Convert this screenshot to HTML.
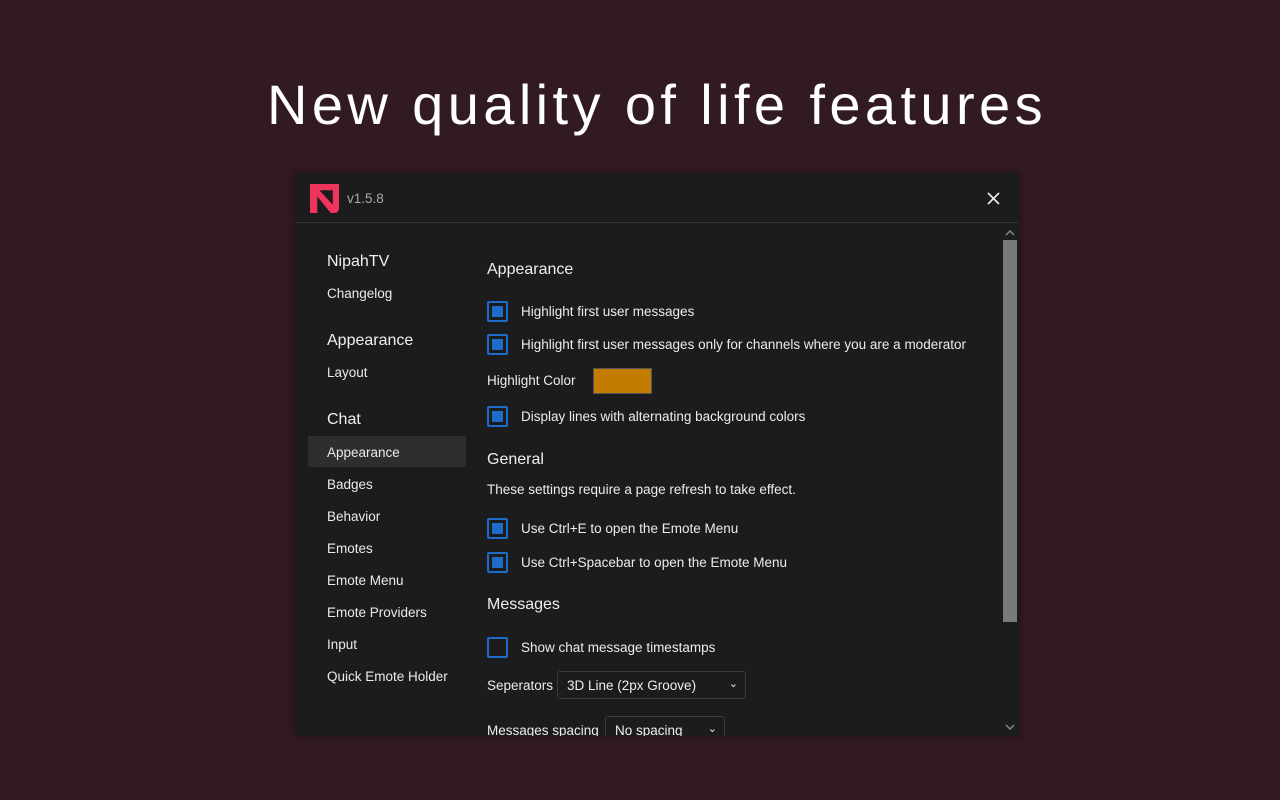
<!DOCTYPE html>
<html><head><meta charset="utf-8"><style>
*{box-sizing:border-box;margin:0;padding:0}
body{width:1280px;height:800px;background:#311a20;font-family:"Liberation Sans",sans-serif;position:relative;overflow:hidden;color:#e8e8e8}
h1{position:absolute;left:17px;width:1280px;top:72px;text-align:center;font-weight:400;font-size:56px;letter-spacing:4.4px;color:#fff}
.win{position:absolute;left:295px;top:173px;width:724px;height:563px;background:#1c1c1e;box-shadow:0 0 8px rgba(0,0,0,.4);overflow:hidden}
.hdr{position:absolute;left:0;top:0;width:724px;height:50px;border-bottom:1px solid #333}
.a{position:absolute;white-space:nowrap}
.nav{font-size:13.5px;color:#eaeaea}
.navh{font-size:16px;color:#f0f0f0}
.sel{position:absolute;left:13px;top:263px;width:158px;height:31px;background:#2e2e30}
.h2{font-size:16px;color:#eee}
.t{font-size:13.5px;color:#ececec}
.cb{position:absolute;width:21px;height:21px;border:2px solid #1d6cc7;border-radius:2px}
.cb.on::after{content:"";position:absolute;left:3px;top:3px;width:11px;height:11px;background:#1d6cc7}
.sb{position:absolute;left:707px;top:51px;width:16px;height:512px;background:#1c1c1e}
.th{position:absolute;left:708px;top:67px;width:14px;height:382px;background:#7a7a7a}
.selbox{position:absolute;height:28px;border:1px solid #3c3c3e;border-radius:3px;background:#1c1c1e;font-size:13.5px;color:#eee;padding:6px 9px}
</style></head><body>
<h1>New quality of life features</h1>
<div class="win">
 <div class="hdr">
  <svg class="a" style="left:15px;top:11px" width="29" height="29" viewBox="0 0 28 28"><path d="M0 0H28V23Q28 28 23 28H20L7 12V28H0Z M9 6H22V20Z" fill="#f0355c" fill-rule="evenodd"/></svg>
  <div class="a" style="left:52px;top:18px;font-size:13.5px;color:#a8a8a8">v1.5.8</div>
  <svg class="a" style="left:692px;top:19px" width="13" height="13" viewBox="0 0 13 13"><path d="M1 1L12 12M12 1L1 12" stroke="#eee" stroke-width="1.6"/></svg>
 </div>
 <div class="sel"></div>
 <div class="a navh" style="left:32px;top:80px">NipahTV</div>
 <div class="a nav" style="left:32px;top:113px">Changelog</div>
 <div class="a navh" style="left:32px;top:159px">Appearance</div>
 <div class="a nav" style="left:32px;top:192px">Layout</div>
 <div class="a navh" style="left:32px;top:238px">Chat</div>
 <div class="a nav" style="left:32px;top:272px">Appearance</div>
 <div class="a nav" style="left:32px;top:304px">Badges</div>
 <div class="a nav" style="left:32px;top:336px">Behavior</div>
 <div class="a nav" style="left:32px;top:368px">Emotes</div>
 <div class="a nav" style="left:32px;top:400px">Emote Menu</div>
 <div class="a nav" style="left:32px;top:432px">Emote Providers</div>
 <div class="a nav" style="left:32px;top:464px">Input</div>
 <div class="a nav" style="left:32px;top:496px">Quick Emote Holder</div>

 <div class="a h2" style="left:192px;top:88px">Appearance</div>
 <div class="cb on" style="left:192px;top:128px"></div><div class="a t" style="left:226px;top:131px">Highlight first user messages</div>
 <div class="cb on" style="left:192px;top:161px"></div><div class="a t" style="left:226px;top:164px">Highlight first user messages only for channels where you are a moderator</div>
 <div class="a t" style="left:192px;top:200px">Highlight Color</div>
 <div class="a" style="left:298px;top:195px;width:59px;height:26px;background:#c27c00;border:1px solid #555"></div>
 <div class="cb on" style="left:192px;top:233px"></div><div class="a t" style="left:226px;top:236px">Display lines with alternating background colors</div>
 <div class="a h2" style="left:192px;top:278px">General</div>
 <div class="a t" style="left:192px;top:309px">These settings require a page refresh to take effect.</div>
 <div class="cb on" style="left:192px;top:345px"></div><div class="a t" style="left:226px;top:348px">Use Ctrl+E to open the Emote Menu</div>
 <div class="cb on" style="left:192px;top:379px"></div><div class="a t" style="left:226px;top:382px">Use Ctrl+Spacebar to open the Emote Menu</div>
 <div class="a h2" style="left:192px;top:423px">Messages</div>
 <div class="cb" style="left:192px;top:464px"></div><div class="a t" style="left:226px;top:467px">Show chat message timestamps</div>
 <div class="a t" style="left:192px;top:505px">Seperators</div>
 <div class="selbox" style="left:262px;top:498px;width:189px">3D Line (2px Groove)<span style="position:absolute;right:7px;top:5px;font-size:11px">&#8964;</span></div>
 <div class="a t" style="left:192px;top:550px">Messages spacing</div>
 <div class="selbox" style="left:310px;top:543px;width:120px">No spacing<span style="position:absolute;right:7px;top:5px;font-size:11px">&#8964;</span></div>
 <div class="sb"></div><div class="th"></div>
 <svg class="a" style="left:710px;top:56px" width="10" height="7" viewBox="0 0 10 7"><path d="M1 6L5 2L9 6" stroke="#888" stroke-width="1.5" fill="none"/></svg>
 <svg class="a" style="left:710px;top:551px" width="10" height="7" viewBox="0 0 10 7"><path d="M1 1L5 5L9 1" stroke="#888" stroke-width="1.5" fill="none"/></svg>
</div>
</body></html>
